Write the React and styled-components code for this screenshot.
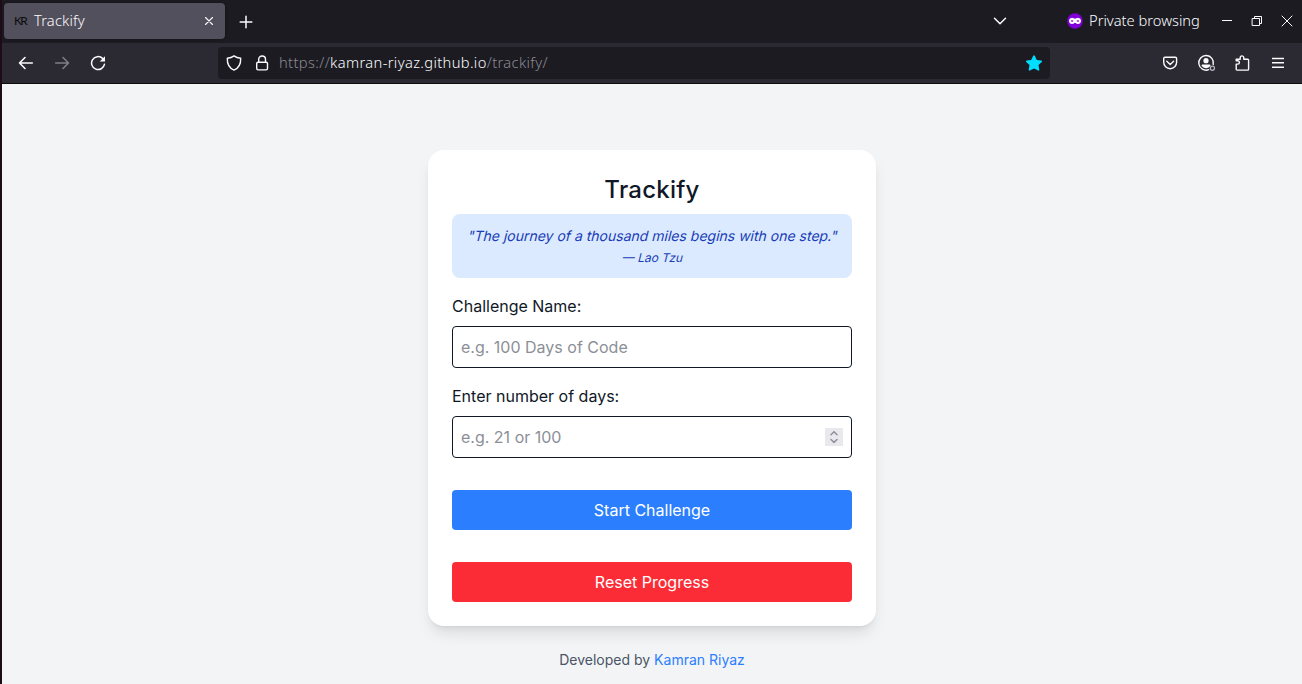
import React from "react";
import styled, { createGlobalStyle } from "styled-components";

const GlobalStyle = createGlobalStyle`
  *, *::before, *::after { box-sizing: border-box; }
  body { margin: 0; background: #f3f4f6; overflow: hidden; }
  h1, p { margin: 0; }
  svg { display: block; flex: none; }
`;

const BrowserWindow = styled.div`
  display: flex;
  flex-direction: column;
  height: 684px;
  border-left: 2px solid #1d0c18;
  background: #f3f4f6;
`;

const TabBar = styled.div`
  display: flex;
  align-items: center;
  height: 43px;
  padding: 0 7px 0 2px;
  background: #1c1b22;
  color: #fbfbfe;
  font-family: "Noto Sans", sans-serif;
`;

const Tab = styled.div`
  display: flex;
  align-items: center;
  width: 221px;
  height: 36px;
  margin-top: -1px;
  padding: 0 11px 0 10px;
  border-radius: 4px;
  background: #52505c;
  box-shadow: 0 0 3px rgba(0, 0, 0, 0.4);
`;

const Favicon = styled.span`
  width: 20px;
  color: #0c0c0d;
  font: 12px/16px Lato, sans-serif;
  letter-spacing: -1.6px;
`;

const ChromeText = styled.span`
  flex: ${(p) => (p.$grow ? 1 : "none")};
  padding-bottom: 2px;
  font-size: 14.7px;
  font-weight: 350;
  line-height: 20px;
  letter-spacing: ${(p) => p.$tracking || "0"};
  white-space: nowrap;
`;

const NewTab = styled.div`
  margin: 0 auto 0 14px;
`;

const TabList = styled.div`
  margin: -1px 60px 0 0;
`;

const PrivateBadge = styled.div`
  display: flex;
  align-items: center;
  gap: 6px;
  width: 135px;
  margin-top: -2px;
`;

const WindowControls = styled.div`
  display: flex;
  align-items: center;
  gap: 14px;
  margin: -1px 0 0 17px;
`;

const NavBar = styled.div`
  display: flex;
  align-items: center;
  height: 41px;
  padding: 0 16px;
  background: #2b2a33;
  border-bottom: 1px solid #0c0c0d;
  color: #fbfbfe;
`;

const NavButtons = styled.div`
  display: flex;
  gap: 20px;
  width: 200px;
`;

const AddressBar = styled.div`
  display: flex;
  align-items: center;
  width: 832px;
  height: 32px;
  padding: 0 8px;
  border-radius: 4px;
  background: #1c1b22;
  font-family: "Noto Sans", sans-serif;
`;

const SiteIcons = styled.div`
  display: flex;
  gap: 12px;
  width: 53px;
`;

const Muted = styled.span`
  color: #8b8a93;
`;

const ToolbarActions = styled.div`
  display: flex;
  gap: 20px;
  margin-left: auto;
`;

const Page = styled.main`
  display: flex;
  flex: 1;
  flex-direction: column;
  align-items: center;
  padding-top: 66px;
  color: #101828;
  font: 16px/24px Inter, sans-serif;
`;

const Card = styled.section`
  width: 448px;
  padding: 24px;
  border-radius: 16px;
  background: #fff;
  box-shadow: 0 10px 15px -3px rgba(0, 0, 0, 0.1), 0 4px 6px -4px rgba(0, 0, 0, 0.1);
`;

const Title = styled.h1`
  margin-bottom: 8px;
  font-size: 24px;
  font-weight: 500;
  line-height: 32px;
  letter-spacing: 0.25px;
  text-align: center;
`;

const Quote = styled.div`
  margin-bottom: 16px;
  padding: 12px 0 12px 2px;
  border-radius: 8px;
  background: #dbeafe;
  color: #193cb8;
  text-align: center;
`;

/* Slants the upright face, keeping its two-storey "a". */
const Slanted = styled.p`
  transform: skewX(-14deg);
  white-space: nowrap;
`;

const QuoteText = styled(Slanted)`
  font-size: 14px;
  line-height: 20px;
`;

const QuoteAuthor = styled(Slanted)`
  margin-top: 4px;
  font-size: 12px;
  line-height: 16px;
`;

const Field = styled.label`
  display: flex;
  flex-direction: column;
  gap: 8px;
  margin-bottom: 16px;
`;

const InputBox = styled.span`
  display: flex;
  align-items: center;
  height: 42px;
  padding: 0 8px;
  border: 1px solid #101828;
  border-radius: 4px;
`;

const Input = styled.input`
  flex: 1;
  min-width: 0;
  padding: 0;
  border: 0;
  outline: 0;
  background: transparent;
  color: inherit;
  font: inherit;
  &::placeholder { color: #8c8f96; opacity: 1; }
`;

const Stepper = styled.span`
  display: flex;
  align-items: center;
  justify-content: center;
  width: 18px;
  height: 18px;
  background: #e9e9ed;
`;

const Button = styled.button`
  display: block;
  width: 100%;
  height: 40px;
  margin-top: 32px;
  padding: 0;
  border: 0;
  border-radius: 4px;
  background: ${(p) => p.$color};
  color: #fff;
  font: inherit;
`;

const Footer = styled.footer`
  margin-top: 24px;
  color: #4a5565;
  font-size: 14px;
  line-height: 20px;
`;

const AuthorLink = styled.a`
  color: #2b7fff;
`;

const Icon = ({ size = 16, width = 1.4, children, ...rest }) => (
  <svg width={size} height={size} viewBox={`0 0 ${size} ${size}`} fill="none" stroke="currentColor"
    strokeWidth={width} strokeLinecap="round" strokeLinejoin="round" {...rest}>
    {children}
  </svg>
);

const AccountIcon = styled(Icon)`
  margin: -1px 0 -1px -1px;
`;

const ExtensionIcon = styled(Icon)`
  margin-left: -1px;
`;

function Tabs() {
  return (
    <TabBar>
      <Tab>
        <Favicon>KR</Favicon>
        <ChromeText $grow $tracking="0.15px">Trackify</ChromeText>
        <Icon size={10} width={1.1}><path d="M1.5 1.5l7 7M8.5 1.5l-7 7" /></Icon>
      </Tab>
      <NewTab><Icon size={14} width={1.5}><path d="M7 1.2v11.6M1.2 7h11.6" /></Icon></NewTab>
      <TabList><Icon size={14} width={1.5}><path d="M1.5 4.2L7 9.7l5.500-5.500" /></Icon></TabList>
      <PrivateBadge>
        <Icon stroke="none">
          <circle cx="8" cy="8" r="7.8" fill="#8000d7" />
          <path fill="#fff" d="M4.600 4.900C6.200 4.700 7 5.700 8 5.700s1.800-1 3.400-.8c1.700.200 2.600 1.300 2.600 2.900 0 2-1.300 3.300-3.100 3.300C9.300 11.100 8.900 9.800 8 9.800s-1.300 1.300-2.900 1.300C3.300 11.100 2 9.800 2 7.800c0-1.600.9-2.700 2.600-2.900z" />
          <ellipse cx="5.100" cy="8" rx="1.300" ry=".8" fill="#8000d7" />
          <ellipse cx="10.900" cy="8" rx="1.300" ry=".8" fill="#8000d7" />
        </Icon>
        <ChromeText>Private browsing</ChromeText>
      </PrivateBadge>
      <WindowControls>
        <Icon width={1} strokeLinecap="butt"><path d="M3 7.500h10" /></Icon>
        <Icon width={1} strokeLinejoin="miter"><path d="M3.500 5.500h7v7h-7zM5.500 5.500v-2h7v7h-2" /></Icon>
        <Icon width={1}><path d="M3 3l10 10M13 3L3 13" /></Icon>
      </WindowControls>
    </TabBar>
  );
}

function Navigation() {
  return (
    <NavBar>
      <NavButtons>
        <Icon width={1.6}><path d="M14.300 8H1.500M7 2.500L1.500 8 7 13.500" /></Icon>
        <Icon width={1.6} opacity={0.4}><path d="M1.700 8h12.800M9 2.500L14.500 8 9 13.500" /></Icon>
        <Icon width={1.5}>
          <path d="M14.500 9.200A6.500 6.500 0 1 1 12.600 3.400" />
          <path d="M15 1.200v5.300H9.700z" fill="currentColor" stroke="none" />
        </Icon>
      </NavButtons>
      <AddressBar>
        <SiteIcons>
          <Icon width={1.4}><path d="M8 .9c2 1.500 4.200 2.100 6.700 2.300.2 5.300-1.600 9.700-6.700 11.900C2.900 12.900 1.100 8.500 1.300 3.200 3.800 3 6 2.400 8 .9z" /></Icon>
          <Icon width={1.4}><rect x="2.700" y="7.200" width="10.800" height="7.700" rx="1.400" /><path d="M4.700 7V4.400a3.400 3.400 0 0 1 6.800 0V7" /></Icon>
        </SiteIcons>
        <ChromeText $grow $tracking="0.36px"><Muted>https://</Muted>kamran-riyaz.github.io<Muted>/trackify/</Muted></ChromeText>
        <Icon stroke="none"><path fill="#00ddff" d="M7.200.700a.9.9 0 0 1 1.600 0l2 4.200 4.500.6c.8.100 1 .9.500 1.400l-3.300 3.200.8 4.600c.1.800-.6 1.200-1.200.9L8 13.400l-4.100 2.200c-.6.3-1.300-.1-1.200-.9l.8-4.600L.2 6.900c-.5-.5-.3-1.300.5-1.400l4.500-.6z" /></Icon>
      </AddressBar>
      <ToolbarActions>
        <Icon><path d="M3 2.300h10.300c.8 0 1.300.5 1.300 1.300v3.600c0 3.600-2.800 6.500-6.400 6.500S1.700 10.800 1.700 7.200V3.600c0-.8.5-1.300 1.300-1.300z" /><path d="M4.800 6.300l3.400 3.300 3.400-3.300" /></Icon>
        <AccountIcon size={18}>
          <path d="M11.600 15.700A7.300 7.300 0 1 1 16.200 10.500" />
          <circle cx="9" cy="6.700" r="2.600" fill="currentColor" stroke="none" />
          <path d="M4.500 11.600c0-.7.500-1.100 1.100-1.100h6.800c.7 0 1.100.4 1.100 1.100-2.200 3.600-6.800 3.600-9 0z" fill="currentColor" stroke="none" />
          <circle cx="15.400" cy="14.200" r="2.100" stroke="#b7b6bd" strokeWidth="1.300" />
        </AccountIcon>
        <ExtensionIcon><path d="M2.200 9.100h1.500a1.700 1.700 0 0 0 0-3.400H2.200V4.200h4V2.700a1.800 1.800 0 0 1 3.600 0v1.500h3.900c.5 0 .9.400.9.900v9.100c0 .5-.4.900-.9.900H3.100c-.5 0-.9-.4-.9-.9V9.100z" /></ExtensionIcon>
        <Icon width={1.4} strokeLinecap="butt"><path d="M2 3.500h12M2 7.800h12M2 12.300h12" /></Icon>
      </ToolbarActions>
    </NavBar>
  );
}

export default function App() {
  return (
    <BrowserWindow>
      <GlobalStyle />
      <Tabs />
      <Navigation />
      <Page>
        <Card>
          <Title>Trackify</Title>
          <Quote>
            <QuoteText>"The journey of a thousand miles begins with one step."</QuoteText>
            <QuoteAuthor>— Lao Tzu</QuoteAuthor>
          </Quote>
          <Field>
            Challenge Name:
            <InputBox><Input placeholder="e.g. 100 Days of Code" /></InputBox>
          </Field>
          <Field>
            Enter number of days:
            <InputBox>
              <Input placeholder="e.g. 21 or 100" />
              <Stepper>
                <Icon size={18} width={1.5} stroke="#8f8f9d"><path d="M6 6.700l3-2.900 3 2.900M6 11.500l3 2.900 3-2.900" /></Icon>
              </Stepper>
            </InputBox>
          </Field>
          <Button $color="#2b7fff">Start Challenge</Button>
          <Button $color="#fb2c36">Reset Progress</Button>
        </Card>
        <Footer>Developed by <AuthorLink>Kamran Riyaz</AuthorLink></Footer>
      </Page>
    </BrowserWindow>
  );
}
